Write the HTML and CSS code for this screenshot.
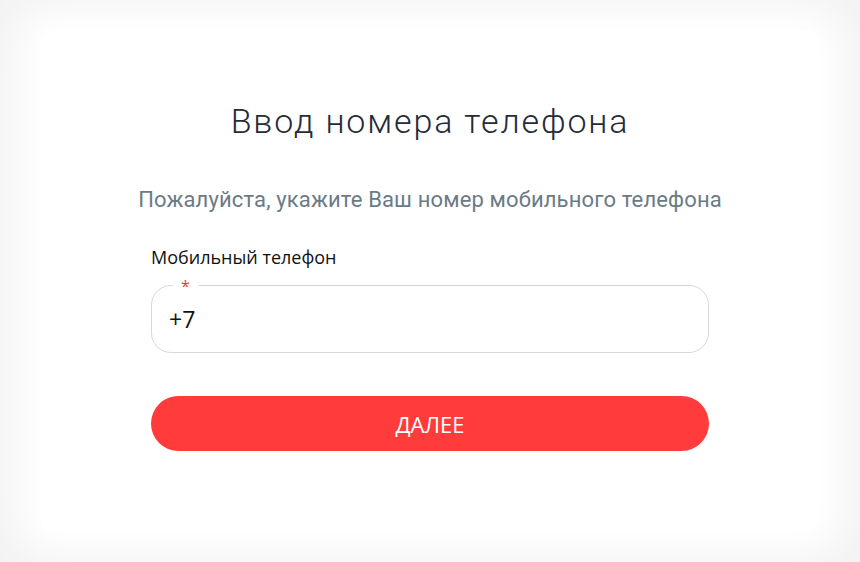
FILE: index.html
```html
<!DOCTYPE html>
<html lang="ru">
<head>
<meta charset="utf-8">
<title>Ввод номера телефона</title>
<link rel="stylesheet" href="styles.css">
</head>
<body>
<main class="card">
  <h1 class="title">Ввод номера телефона</h1>
  <p class="subtitle">Пожалуйста, укажите Ваш номер мобильного телефона</p>
  <form class="form">
    <label class="label" for="phone">Мобильный телефон</label>
    <div class="field">
      <span class="req">*</span>
      <input id="phone" class="input" type="text" value="+7">
    </div>
    <button type="button" class="btn">ДАЛЕЕ</button>
  </form>
</main>
</body>
</html>
```
FILE: styles.css
```css
html, body {
  margin: 0;
  padding: 0;
}
body {
  background: #f3f3f3;
  height: 562px;
  padding: 30px 40px 30px;
  box-sizing: border-box;
  overflow: hidden;
}
.card {
  background: #fff;
  height: 100%;
  border-radius: 14px;
  box-shadow: 0 0 40px 24px #fff;
  display: flex;
  flex-direction: column;
  align-items: center;
  padding-top: 71px;
  box-sizing: border-box;
}
.title {
  margin: 0;
  font-family: Roboto, "Liberation Sans", sans-serif;
  font-weight: 300;
  font-size: 34px;
  line-height: 40px;
  letter-spacing: 1.85px;
  color: #262b38;
}
.subtitle {
  margin: 47px 0 0;
  font-family: Roboto, "Liberation Sans", sans-serif;
  font-size: 22px;
  line-height: 24px;
  letter-spacing: 0.15px;
  color: #6b7b86;
}
.form {
  width: 558px;
  margin-top: 33px;
  display: flex;
  flex-direction: column;
}
.label {
  font-family: "Open Sans", "Noto Sans", sans-serif;
  font-size: 18px;
  line-height: 24px;
  color: #111;
}
.field {
  position: relative;
  margin-top: 16px;
  height: 68px;
  border: 1px solid #d8d8d8;
  border-radius: 20px;
  box-sizing: border-box;
}
.req {
  position: absolute;
  left: 21px;
  top: -8px;
  padding: 0 8px;
  background: #fff;
  color: #ef3b3b;
  font-family: "Open Sans", sans-serif;
  font-size: 16px;
  line-height: 16px;
}
.input {
  border: 0;
  outline: none;
  background: transparent;
  width: 100%;
  height: 100%;
  box-sizing: border-box;
  padding: 0 0 0 17px;
  font-family: "Open Sans", "Noto Sans", sans-serif;
  font-size: 23px;
  color: #111;
}
.btn {
  margin-top: 43px;
  height: 55px;
  border: 0;
  border-radius: 28px;
  background: #ff3b3b;
  color: #fff;
  font-family: "Open Sans", "Noto Sans", sans-serif;
  font-size: 22px;
  cursor: pointer;
}
```
